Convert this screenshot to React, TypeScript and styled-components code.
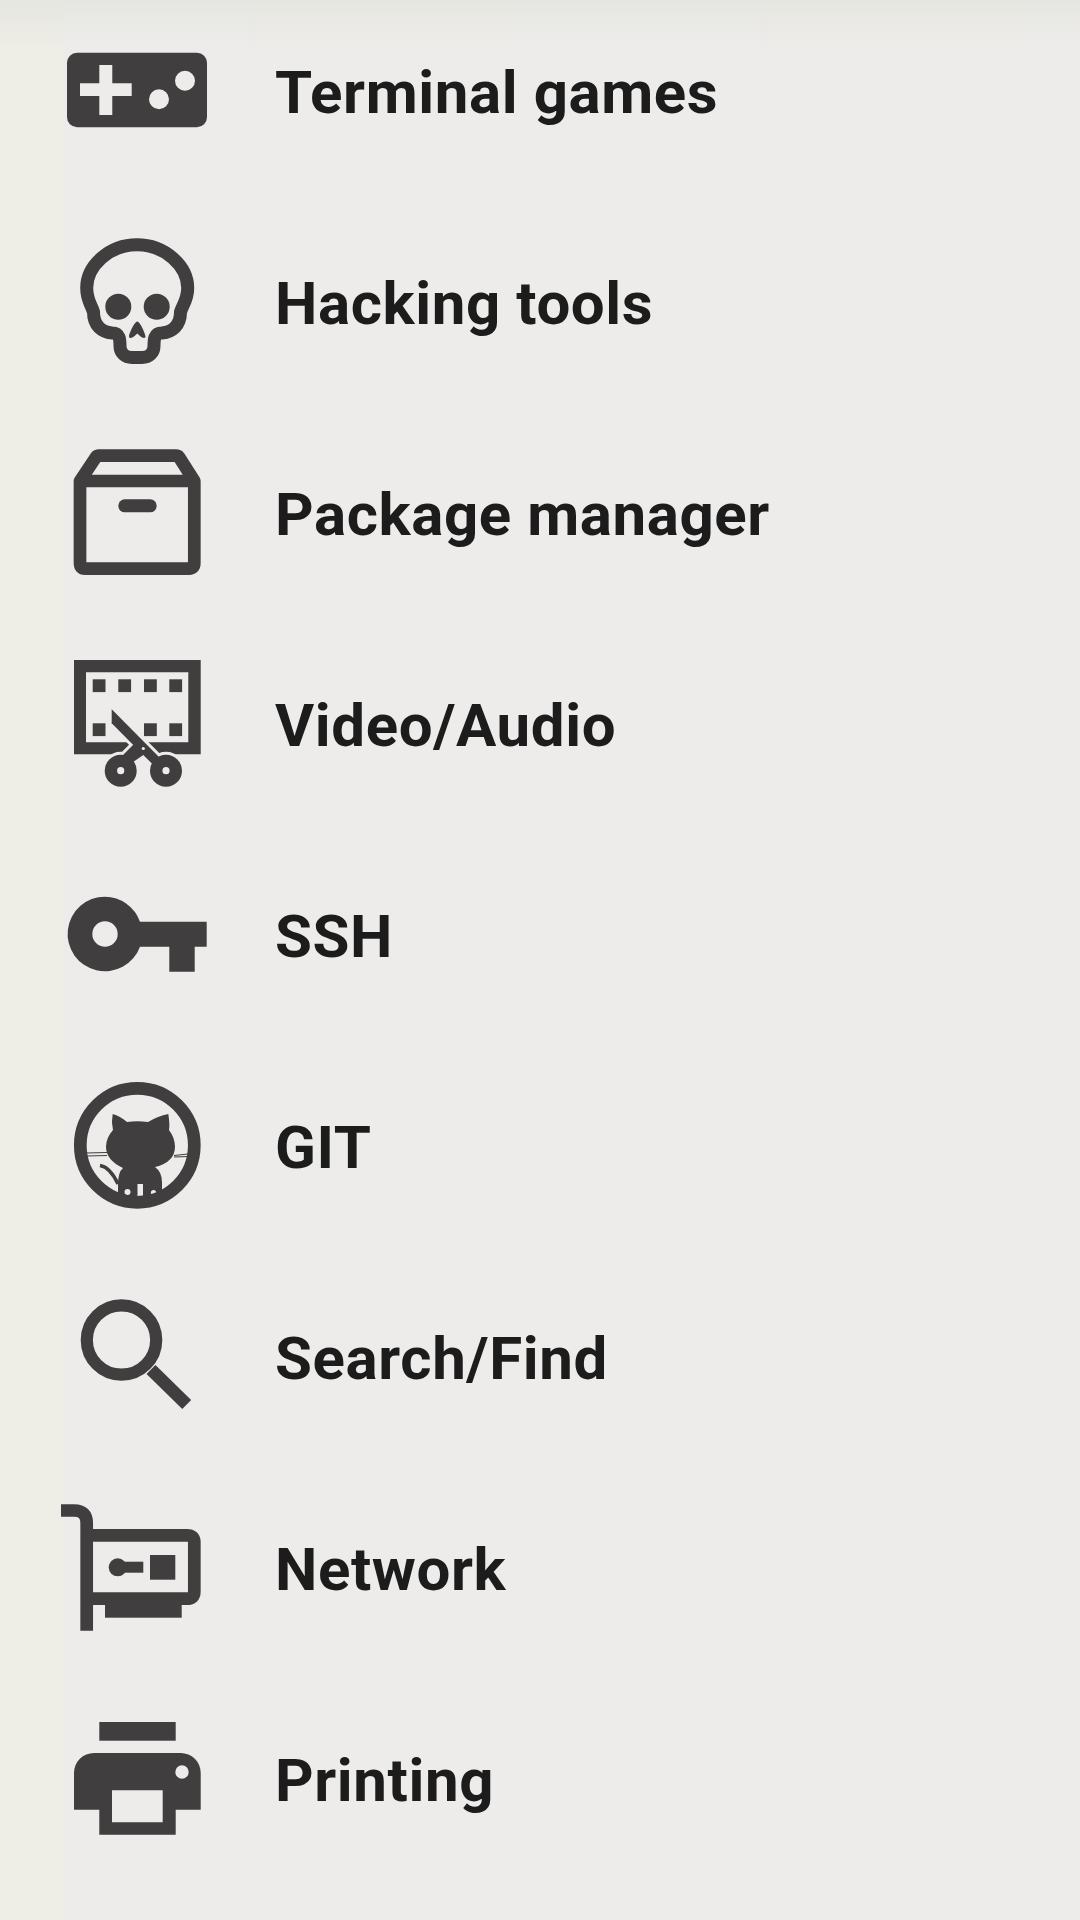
import React from 'react'
import styled, { createGlobalStyle } from 'styled-components'

const GlobalStyle = createGlobalStyle`
html, body {
  margin: 0;
  padding: 0;
  background: #edecea;
}
`

const PAGE = '#edecea'

const GameIcon = () => (
  <Svg viewBox="0 0 170 170">
    <path
      fillRule="evenodd"
      d="M27 47.7H147A10 10 0 0 1 157 57.7V112.3A10 10 0 0 1 147 122.3H27A10 10 0 0 1 17 112.3V57.7A10 10 0 0 1 27 47.7ZM49.3 60V78.3H30V91H49.3V110H62.3V91H81.7V78.3H62.3V60ZM135 65.7A10 10 0 1 0 135 85.7A10 10 0 1 0 135 65.7ZM109 84.3A10 10 0 1 0 109 104.3A10 10 0 1 0 109 84.3Z"
    />
  </Svg>
)

const SkullIcon = () => (
  <Svg viewBox="0 0 170 170">
    <path
      fill="none"
      stroke="currentColor"
      strokeWidth="13"
      d="M87 28.7C59 28.7 36.7 50 36.7 72C36.7 84 41 88 43.5 96C43.5 110 52 116 62 117C70 117 70 124 70 130C70 137 75 141.5 82 141.5H92C99 141.5 104 137 104 130C104 124 104 117 112 117C122 116 130.5 110 130.5 96C133 88 137.7 84 137.7 72C137.7 50 115 28.7 87 28.7Z"
    />
    <circle cx="68.3" cy="90.7" r="13" />
    <circle cx="106.7" cy="90.7" r="13" />
    <path d="M87.3 105.5C90 105.5 95.5 118 95.5 120.5C95.5 123 92 122.5 87.3 117.5C82.5 122.5 79 123 79 120.5C79 118 84.5 105.5 87.3 105.5Z" />
  </Svg>
)

const BoxIcon = () => (
  <Svg viewBox="0 0 170 170">
    <path
      fill="none"
      stroke="currentColor"
      strokeWidth="12.7"
      strokeLinejoin="round"
      d="M30 54L46 30Q47 28.7 49 28.7H126Q128 28.7 129 30L144.3 54V136Q144.3 141.7 139 141.7H35Q30 141.7 30 136ZM30 54H144.3"
    />
    <rect x="68.3" y="72.3" width="38.4" height="13" rx="6.5" />
  </Svg>
)

const bladePath = 'M61.7 71.3L110 120L103.3 127L93.3 117L83.3 107L61.7 85.3Z'
const armPath = 'M73 117L88 102L98 112L93.3 117L81.7 125Z'

const VideoIcon = () => (
  <Svg viewBox="0 0 170 170">
    <path
      fillRule="evenodd"
      d="M24 22H150.7V116.3H24ZM36 34.3V104.3H138.3V34.3Z"
    />
    {[42.7, 68.3, 94, 119.3].map(x => (
      <rect key={x} x={x} y="41.3" width="12.8" height="12.8" />
    ))}
    {[42.7, 94, 119.3].map(x => (
      <rect key={x} x={x} y="85.3" width="12.8" height="12.8" />
    ))}
    <g stroke={PAGE} strokeWidth="6">
      <circle cx="70.7" cy="132.7" r="16" />
      <circle cx="116" cy="132.7" r="16" />
      <path d={bladePath} />
      <path d={armPath} />
    </g>
    <circle cx="70.7" cy="132.7" r="16" />
    <circle cx="116" cy="132.7" r="16" />
    <path d={bladePath} />
    <path d={armPath} />
    <circle cx="70.7" cy="132.7" r="3.6" fill={PAGE} />
    <circle cx="116" cy="132.7" r="3.6" fill={PAGE} />
    <circle cx="93.3" cy="110.5" r="1.6" fill={PAGE} />
  </Svg>
)

const KeyIcon = () => (
  <Svg viewBox="0 0 170 170">
    <path
      fillRule="evenodd"
      d="M55 47.7A37.3 37.3 0 0 1 90 72.7H156.7V97.7H144.7V122.7H119.3V97.7H90A37.3 37.3 0 1 1 55 47.7ZM55 72.3A12.7 12.7 0 1 0 55 97.7A12.7 12.7 0 1 0 55 72.3Z"
    />
  </Svg>
)

const GitIcon = () => (
  <Svg viewBox="0 0 170 170">
    <path d="M62.7 54Q70 56 77 62Q87 60.5 98 62Q108 56 118.3 54Q120 65 119 70Q125 78 125 86.7Q125 102 105 107Q112 112 112 122V138H68V125Q68 112 73 108Q56 100 56 86.7Q56 78 63 70Q61 62 62.7 54Z" />
    <path
      fill="none"
      stroke="currentColor"
      strokeWidth="3.5"
      d="M50 105.5Q60 107 68 124"
    />
    <path
      fill="none"
      stroke="currentColor"
      strokeWidth="1.2"
      d="M36 93L57 92.5M36 96L57 95.5M124 95.5L138 94M124 97L138 96.5"
    />
    <circle cx="77.5" cy="132" r="3" fill={PAGE} />
    <rect x="87.5" y="124" width="5.5" height="13" fill={PAGE} />
    <circle cx="103.5" cy="132.5" r="2.6" fill={PAGE} />
    <circle
      cx="87.3"
      cy="85.3"
      r="57"
      fill="none"
      stroke="currentColor"
      strokeWidth="12.7"
    />
  </Svg>
)

const SearchIcon = () => (
  <Svg viewBox="0 0 170 170">
    <circle
      cx="71.5"
      cy="69"
      r="34.7"
      fill="none"
      stroke="currentColor"
      strokeWidth="12.2"
    />
    <path
      fill="none"
      stroke="currentColor"
      strokeWidth="12.7"
      d="M101 98.5L136.7 133.5"
    />
  </Svg>
)

const NetworkIcon = () => (
  <Svg viewBox="0 0 170 170">
    <path
      fill="none"
      stroke="currentColor"
      strokeWidth="12.7"
      d="M11 28.5H24Q36.7 28.5 36.7 41V148.7M36.7 53.3H137Q144.3 53.3 144.3 60V110Q144.3 116.7 137 116.7H36.7"
    />
    <rect x="55" y="116" width="76.7" height="19.7" />
    <rect x="100" y="73" width="25.3" height="24.7" />
    <circle cx="67.7" cy="85.3" r="9" />
    <rect x="67.7" y="79.7" width="25.6" height="11" />
  </Svg>
)

const PrinterIcon = () => (
  <Svg viewBox="0 0 170 170">
    <rect x="49.3" y="29" width="76.4" height="18.7" />
    <path
      fillRule="evenodd"
      d="M44 60H130.7A20 20 0 0 1 150.7 80V116.7H125.7V141.7H49.3V116.7H24V80A20 20 0 0 1 44 60ZM62 97.3V129.3H112.7V97.3ZM132 72.3A6.7 6.7 0 1 0 132 85.7A6.7 6.7 0 1 0 132 72.3Z"
    />
  </Svg>
)

const items = [
  { label: 'Terminal games', icon: <GameIcon /> },
  { label: 'Hacking tools', icon: <SkullIcon /> },
  { label: 'Package manager', icon: <BoxIcon /> },
  { label: 'Video/Audio', icon: <VideoIcon /> },
  { label: 'SSH', icon: <KeyIcon /> },
  { label: 'GIT', icon: <GitIcon /> },
  { label: 'Search/Find', icon: <SearchIcon /> },
  { label: 'Network', icon: <NetworkIcon /> },
  { label: 'Printing', icon: <PrinterIcon /> },
]

const App = () => {
  return (
    <Page>
      <GlobalStyle />
      <List>
        {items.map(item => (
          <Row key={item.label}>
            {item.icon}
            <Label>{item.label}</Label>
          </Row>
        ))}
      </List>
    </Page>
  )
}

const Page = styled.div`
width: 1080px;
height: 1920px;
overflow: hidden;
background:
  linear-gradient(180deg, #e6e6e1 0, rgba(237, 236, 230, 0) 48px),
  linear-gradient(90deg, #eeede6 0, #eeede6 62px, #edecea 64px);
`

const List = styled.ul`
list-style-type: none;
margin: 0;
padding: 0;
display: flex;
flex-direction: column;
gap: 31px;
`

const Row = styled.li`
display: flex;
align-items: center;
height: 180px;
padding-left: 50px;
gap: 55px;
`

const Svg = styled.svg`
flex: none;
width: 170px;
height: 170px;
color: #403e3e;
fill: currentColor;
`

const Label = styled.span`
padding-top: 4px;
font-family: Roboto, "Liberation Sans", sans-serif;
font-size: 60px;
font-weight: 700;
letter-spacing: 0.6px;
color: #1c1c1c;
`

export default App
